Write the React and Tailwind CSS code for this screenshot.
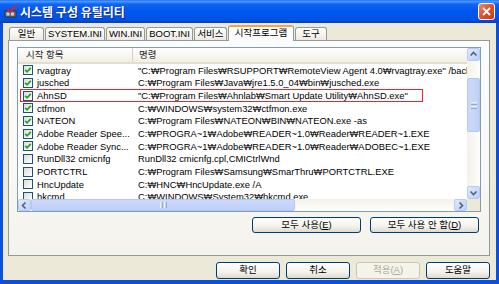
const items = [
  { name: "rvagtray", cmd: "\"C:₩Program Files₩RSUPPORT₩RemoteView Agent 4.0₩rvagtray.exe\" /background", on: true },
  { name: "jusched", cmd: "C:₩Program Files₩Java₩jre1.5.0_04₩bin₩jusched.exe", on: true },
  { name: "AhnSD", cmd: "\"C:₩Program Files₩Ahnlab₩Smart Update Utility₩AhnSD.exe\"", on: true, marked: true },
  { name: "ctfmon", cmd: "C:₩WINDOWS₩system32₩ctfmon.exe", on: true },
  { name: "NATEON", cmd: "C:₩Program Files₩NATEON₩BIN₩NATEON.exe -as", on: true },
  { name: "Adobe Reader Spee...", cmd: "C:₩PROGRA~1₩Adobe₩READER~1.0₩Reader₩READER~1.EXE", on: true },
  { name: "Adobe Reader Sync...", cmd: "C:₩PROGRA~1₩Adobe₩READER~1.0₩Reader₩ADOBEC~1.EXE", on: true },
  { name: "RunDll32 cmicnfg", cmd: "RunDll32 cmicnfg.cpl,CMICtrlWnd", on: false },
  { name: "PORTCTRL", cmd: "C:₩Program Files₩Samsung₩SmarThru₩PORTCTRL.EXE", on: false },
  { name: "HncUpdate", cmd: "C:₩HNC₩HncUpdate.exe /A", on: false },
  { name: "hkcmd", cmd: "C:₩WINDOWS₩System32₩hkcmd.exe", on: false },
];

const tabs = [
  { label: "일반", w: "w-[35px]" },
  { label: "SYSTEM.INI", w: "w-[60px]" },
  { label: "WIN.INI", w: "w-[39px]" },
  { label: "BOOT.INI", w: "w-[47px]" },
  { label: "서비스", w: "w-[33px]" },
  { label: "시작프로그램", w: "w-[66px]", active: true },
  { label: "도구", w: "w-[32px]" },
];

function Check({ on }) {
  return (
    <span className="flex h-[10px] w-[10px] shrink-0 items-center justify-center border border-[#1c5180] bg-[linear-gradient(135deg,#dcdcd7,#ffffff)]">
      {on && (
        <svg width="8" height="8" viewBox="0 0 8 8">
          <path d="M1.2 3.8 L3.1 5.8 L6.8 1.8" stroke="#21a121" strokeWidth="1.7" fill="none" />
        </svg>
      )}
    </span>
  );
}

function Arrow({ dir, className }) {
  const d = {
    up: "M2.5 6.5 L5.5 3.5 L8.5 6.5",
    down: "M2.5 4.5 L5.5 7.5 L8.5 4.5",
    left: "M6.5 2.5 L3.5 5.5 L6.5 8.5",
    right: "M4.5 2.5 L7.5 5.5 L4.5 8.5",
  }[dir];
  return (
    <div className={`flex shrink-0 items-center justify-center rounded-[2px] border border-[#b7cbf5] bg-[linear-gradient(135deg,#e1eafe,#bccff9)] ${className}`}>
      <svg width="11" height="11" viewBox="0 0 11 11">
        <path d={d} stroke="#4d6185" strokeWidth="1.6" fill="none" />
      </svg>
    </div>
  );
}

function XpButton({ children, className = "", disabled }) {
  return (
    <div
      className={`flex items-center justify-center rounded-[3px] border text-[9.5px] ${
        disabled
          ? "border-[#c9c7ba] bg-[#f5f4ea] text-[#aca899]"
          : "border-[#003c74] bg-[linear-gradient(180deg,#ffffff_0%,#f3f2ec_60%,#dedad0_100%)] text-black"
      } ${className}`}
    >
      {children}
    </div>
  );
}

export default function App() {
  return (
    <div className="flex h-[284px] w-[499px] flex-col bg-[#0b50dc] font-['Liberation_Sans','Noto_Sans_CJK_KR',sans-serif]">
      {/* title bar */}
      <div className="flex h-[23px] shrink-0 items-center bg-[linear-gradient(180deg,#1a6ffc_0%,#4a9bff_6%,#1164f2_18%,#0058ee_45%,#0055e8_75%,#004ad8_92%,#003ec4_100%)] pl-[4px] pr-[4px]">
        <svg width="14" height="13" viewBox="0 0 14 13" className="shrink-0">
          <rect x="1" y="6" width="11" height="6" fill="#6d6d6d" stroke="#2b2b2b" strokeWidth="0.8" />
          <rect x="2.5" y="7.5" width="3" height="3" fill="#cfcfcf" />
          <rect x="7" y="7.5" width="3" height="3" fill="#cfcfcf" />
          <path d="M3.5 4 L6 7 L12.5 0.8" stroke="#d8222a" strokeWidth="2" fill="none" />
        </svg>
        <span className="ml-[2px] text-[12px] font-bold text-white [text-shadow:1px_1px_#0a2a8a] font-['Noto_Sans_CJK_KR',sans-serif]">
          시스템 구성 유틸리티
        </span>
        <div className="ml-auto flex h-[17px] w-[17px] items-center justify-center rounded-[3px] border border-white bg-[linear-gradient(135deg,#ec8c6a,#df5630_45%,#c23b17)]">
          <svg width="11" height="11" viewBox="0 0 11 11">
            <path d="M2 2 L9 9 M9 2 L2 9" stroke="#ffffff" strokeWidth="1.8" />
          </svg>
        </div>
      </div>

      {/* body */}
      <div className="mx-[3px] mb-[4px] flex flex-1 flex-col bg-[#ece9d8] pl-[5px] pr-[6px]">
        {/* tabs */}
        <div className="flex h-[17px] items-end gap-[1px] pl-[1px]">
          {tabs.map((t) =>
            t.active ? (
              <div
                key={t.label}
                className={`relative z-10 -mb-[1px] flex h-[16px] ${t.w} items-center justify-center rounded-t-[3px] border-x border-[#919b9c] border-t-[2px] border-t-[#f2a83c] bg-[#fcfcfe] pb-[1px] text-[9.5px] text-black`}
              >
                {t.label}
              </div>
            ) : (
              <div
                key={t.label}
                className={`flex h-[13px] ${t.w} items-center justify-center rounded-t-[3px] border-x border-t border-[#919b9c] bg-[linear-gradient(180deg,#ffffff,#eceae2)] text-[9.5px] text-black`}
              >
                {t.label}
              </div>
            )
          )}
        </div>

        {/* panel */}
        <div className="flex h-[216px] flex-col border border-[#919b9c] bg-[linear-gradient(180deg,#fcfcfe_0%,#f9f8f4_60%,#f3f2ec_100%)] px-[8px] pt-[6px]">
          {/* list view */}
          <div className="flex h-[165px] flex-col border border-[#7f9db9] bg-white">
            <div className="flex min-h-0 flex-1">
              <div className="flex min-w-0 flex-1 flex-col overflow-hidden">
                <div className="flex h-[16px] shrink-0 items-center border-b-[2px] border-[#e2dfcf] bg-[linear-gradient(180deg,#ffffff,#f1efe5)] text-[9.5px] text-[#222]">
                  <div className="flex h-full w-[115px] items-center border-r border-[#d6d2c2] pl-[8px]">시작 항목</div>
                  <div className="pl-[6px]">명령</div>
                </div>
                <div className="min-h-0 flex-1 overflow-hidden">
                  {items.map((it) => (
                    <div key={it.name} className="relative flex h-[12.67px] items-center whitespace-nowrap text-[9.4px] leading-none text-black">
                      <div className="flex w-[115px] shrink-0 items-center gap-[4px] pl-[5px]">
                        <Check on={it.on} />
                        <span>{it.name}</span>
                      </div>
                      <div className="pl-[5px]">{it.cmd}</div>
                      {it.marked && (
                        <div className="pointer-events-none absolute inset-y-0 left-[2px] w-[403px] border border-[#e8282e]" />
                      )}
                    </div>
                  ))}
                </div>
              </div>
              {/* vertical scrollbar */}
              <div className="flex w-[13px] shrink-0 flex-col bg-[linear-gradient(90deg,#f3f1ea,#fefefb)]">
                <Arrow dir="up" className="h-[13px] w-[13px]" />
                <div className="mt-[17px] flex h-[54px] items-center justify-center rounded-[2px] border border-[#b5c8f2] bg-[linear-gradient(90deg,#cdd9fb,#bfd0f8)]">
                  <div className="flex flex-col gap-[1px]">
                    <div className="h-px w-[6px] bg-[#eef3fe]" />
                    <div className="h-px w-[6px] bg-[#8fa9e6]" />
                    <div className="h-px w-[6px] bg-[#eef3fe]" />
                    <div className="h-px w-[6px] bg-[#8fa9e6]" />
                  </div>
                </div>
                <div className="flex-1" />
                <Arrow dir="down" className="h-[13px] w-[13px]" />
              </div>
            </div>
            {/* horizontal scrollbar */}
            <div className="flex h-[12px] shrink-0">
              <div className="flex flex-1 bg-[linear-gradient(180deg,#f3f1ea,#fefefb)]">
                <Arrow dir="left" className="h-[12px] w-[13px]" />
                <div className="flex h-[12px] w-[264px] items-center justify-center rounded-[2px] border border-[#b5c8f2] bg-[linear-gradient(180deg,#cdd9fb,#bfd0f8)]">
                  <div className="flex gap-[1px]">
                    <div className="h-[6px] w-px bg-[#eef3fe]" />
                    <div className="h-[6px] w-px bg-[#8fa9e6]" />
                    <div className="h-[6px] w-px bg-[#eef3fe]" />
                    <div className="h-[6px] w-px bg-[#8fa9e6]" />
                  </div>
                </div>
                <div className="flex-1" />
                <Arrow dir="right" className="h-[12px] w-[13px]" />
              </div>
              <div className="w-[13px] bg-[#ece9d8]" />
            </div>
          </div>

          {/* enable / disable all */}
          <div className="mt-[5px] flex justify-end gap-[9px] pr-[2px]">
            <XpButton className="h-[16px] w-[109px]">
              모두 사용(<span className="underline">E</span>)
            </XpButton>
            <XpButton className="h-[16px] w-[109px]">
              모두 사용 안 함(<span className="underline">D</span>)
            </XpButton>
          </div>
        </div>

        {/* dialog buttons */}
        <div className="mt-[6px] flex justify-end gap-[6px]">
          <XpButton className="h-[17px] w-[64px]">확인</XpButton>
          <XpButton className="h-[17px] w-[64px]">취소</XpButton>
          <XpButton className="h-[17px] w-[64px]" disabled>
            적용(<span className="underline">A</span>)
          </XpButton>
          <XpButton className="h-[17px] w-[64px]">도움말</XpButton>
        </div>
      </div>
    </div>
  );
}
